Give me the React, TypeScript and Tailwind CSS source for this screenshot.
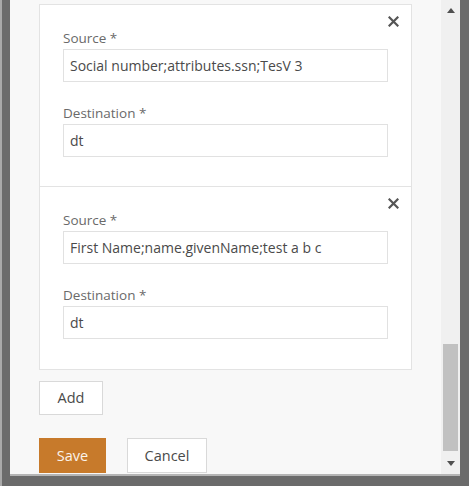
import React from 'react';

const FONT = { fontFamily: '"Open Sans", "Noto Sans", sans-serif' };

const MAPPINGS = [
  { id: 1, source: 'Social number;attributes.ssn;TesV 3', destination: 'dt' },
  { id: 2, source: 'First Name;name.givenName;test a b c', destination: 'dt' },
];

const CloseIcon = () => (
  <svg width="11" height="11" viewBox="0 0 11 11">
    <path d="M1.5 1.5 L9.5 9.5 M9.5 1.5 L1.5 9.5" stroke="#555" strokeWidth="2.2" strokeLinecap="square" />
  </svg>
);

const Field = ({ label, value }: { label: string; value: string }) => (
  <div>
    <div className="h-[20px] leading-[20px] text-[13.5px] text-[#6a6a6a] mb-[1px]">{label}</div>
    <input
      readOnly
      value={value}
      className="w-full h-[33px] border border-[#e1e1e1] bg-white px-[6px] text-[14px] text-[#4a4a4a] outline-none"
      style={FONT}
    />
  </div>
);

export default function App() {
  return (
    <div className="w-[469px] h-[486px] bg-[#6b6b6b] border-l-2 border-[#a9a9a9] pl-[8px] pr-[9px] pb-[10px] flex" style={FONT}>
      <div className="flex-1 flex bg-[#f8f8f8] border-b-2 border-[#b5b5b5] overflow-hidden">
        {/* content */}
        <div className="flex-1 pl-[29px] pr-[29px] pt-[4px]">
          <div className="bg-white border border-[#e3e3e3] divide-y divide-[#e3e3e3]">
            {MAPPINGS.map(m => (
              <div key={m.id} className="relative h-[182px] pt-[23px] px-[23px]">
                <button className="absolute top-[11px] right-[12px] p-0">
                  <CloseIcon />
                </button>
                <Field label="Source *" value={m.source} />
                <div className="h-[21px]" />
                <Field label="Destination *" value={m.destination} />
              </div>
            ))}
          </div>

          <button className="mt-[11px] w-[64px] h-[34px] bg-white border border-[#d9d9d9] text-[14.5px] text-[#4a4a4a]">
            Add
          </button>

          <div className="flex gap-[21px] mt-[23px]">
            <button className="w-[67px] h-[35px] bg-[#c77a2b] text-[14.5px] text-[#fbf3ea]">Save</button>
            <button className="w-[80px] h-[35px] bg-white border border-[#d9d9d9] text-[14.5px] text-[#4a4a4a]">
              Cancel
            </button>
          </div>
        </div>

        {/* scrollbar */}
        <div className="w-[19px] bg-[#f0f0f0] flex flex-col items-center">
          <div className="h-[17px] flex items-center justify-center pt-[4px]">
            <svg width="8" height="5" viewBox="0 0 8 5"><path d="M0 5 L4 0 L8 5 Z" fill="#505050" /></svg>
          </div>
          <div className="flex-1 w-full px-[2px] flex flex-col">
            <div className="h-[327px]" />
            <div className="h-[107px] bg-[#c1c1c1]" />
          </div>
          <div className="h-[22px] flex items-center justify-center">
            <svg width="8" height="5" viewBox="0 0 8 5"><path d="M0 0 L8 0 L4 5 Z" fill="#505050" /></svg>
          </div>
        </div>
      </div>
    </div>
  );
}
